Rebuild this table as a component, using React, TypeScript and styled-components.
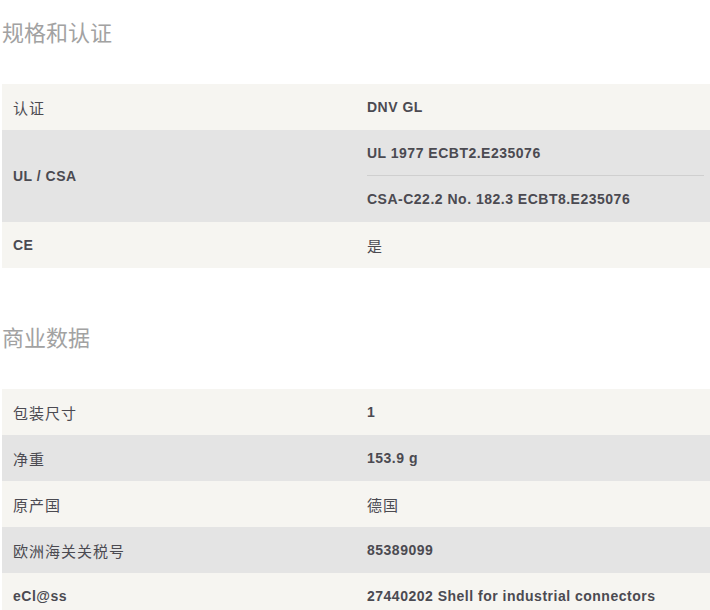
import React from 'react';
import styled, { createGlobalStyle } from 'styled-components';

const GlobalStyle = createGlobalStyle`
  html, body {
    margin: 0;
    padding: 0;
    background: #fff;
  }
  body {
    font-family: "Liberation Sans", "Noto Sans CJK SC", sans-serif;
  }
`

const Page = styled.div`
  width: 710px;
  padding: 18px 0 0 0;
`

const SectionTitle = styled.h2<{ $first?: boolean }>`
  margin: ${p => (p.$first ? '0' : '55px')} 0 40px 2px;
  font-size: 22px;
  line-height: 26px;
  font-weight: 400;
  color: #a2a2a2;
  font-family: "Noto Sans CJK SC", sans-serif;
`

const Table = styled.div`
  margin-left: 2px;
  width: 708px;
  display: flex;
  flex-direction: column;
`

const Row = styled.div<{ $shade: boolean }>`
  display: grid;
  grid-template-columns: 1fr 1fr;
  background: ${p => (p.$shade ? '#e4e4e4' : '#f6f5f1')};
`

const Cell = styled.div`
  display: flex;
  flex-direction: column;
  justify-content: center;
  padding: 0 0 0 11px;
`

const Line = styled.div<{ $split?: boolean }>`
  height: 46px;
  display: flex;
  align-items: center;
  border-bottom: ${p => (p.$split ? '1px solid #cfcfcf' : 'none')};
  margin-right: 6px;
  box-sizing: border-box;
`

const Text = styled.span<{ $cjk?: boolean }>`
  font-size: ${p => (p.$cjk ? '15px' : '14px')};
  letter-spacing: ${p => (p.$cjk ? '1px' : '0.5px')};
  font-weight: ${p => (p.$cjk ? 400 : 700)};
  color: #4b4a51;
  font-family: ${p => (p.$cjk ? '"Noto Sans CJK SC", sans-serif' : '"Liberation Sans", "Noto Sans CJK SC", sans-serif')};
`

type Item = { label: string; values: string[] }

const isCjk = (s: string) => /[\u3400-\u9fff]/.test(s)

const certs: Item[] = [
  { label: '认证', values: ['DNV GL'] },
  { label: 'UL / CSA', values: ['UL 1977 ECBT2.E235076', 'CSA-C22.2 No. 182.3 ECBT8.E235076'] },
  { label: 'CE', values: ['是'] },
]

const commercial: Item[] = [
  { label: '包装尺寸', values: ['1'] },
  { label: '净重', values: ['153.9 g'] },
  { label: '原产国', values: ['德国'] },
  { label: '欧洲海关关税号', values: ['85389099'] },
  { label: 'eCl@ss', values: ['27440202 Shell for industrial connectors'] },
]

const SpecTable: React.FC<{ items: Item[] }> = ({ items }) => (
  <Table>
    {items.map((item, i) => (
      <Row key={item.label} $shade={i % 2 === 1}>
        <Cell>
          <Text $cjk={isCjk(item.label)}>{item.label}</Text>
        </Cell>
        <Cell>
          {item.values.map((v, j) => (
            <Line key={v} $split={j < item.values.length - 1}>
              <Text $cjk={isCjk(v)}>{v}</Text>
            </Line>
          ))}
        </Cell>
      </Row>
    ))}
  </Table>
)

export default function App() {
  return (
    <Page>
      <GlobalStyle />
      <SectionTitle $first>规格和认证</SectionTitle>
      <SpecTable items={certs} />
      <SectionTitle>商业数据</SectionTitle>
      <SpecTable items={commercial} />
    </Page>
  )
}
